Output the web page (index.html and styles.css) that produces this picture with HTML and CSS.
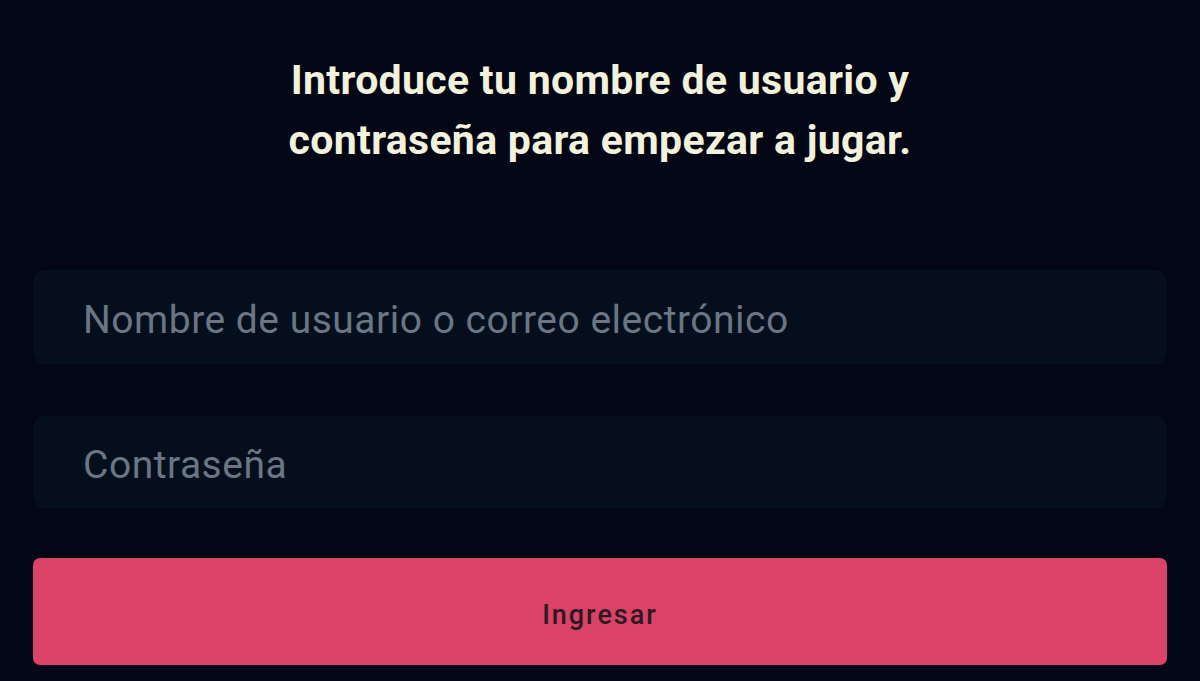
FILE: index.html
```
<!DOCTYPE html>
<html lang="es">
<head>
<meta charset="utf-8">
<link rel="stylesheet" href="styles.css">
</head>
<body>
<main class="login">
  <h1 class="title">Introduce tu nombre de usuario y<br>contraseña para empezar a jugar.</h1>
  <form class="form">
    <input class="field" type="text" placeholder="Nombre de usuario o correo electrónico">
    <input class="field field-pass" type="password" placeholder="Contraseña">
    <button class="submit" type="button">Ingresar</button>
  </form>
</main>
</body>
</html>
```
FILE: styles.css
```
html, body {
  margin: 0;
  padding: 0;
  background: #030614;
  height: 100%;
  overflow: hidden;
}
body {
  font-family: Roboto, "Liberation Sans", sans-serif;
}
.login {
  padding: 50px 33px 0;
}
.title {
  margin: 0;
  text-align: center;
  color: #f1f1dc;
  font-size: 41px;
  line-height: 60px;
  font-weight: 700;
  letter-spacing: 0.3px;
}
.form {
  margin-top: 100px;
  display: flex;
  flex-direction: column;
}
.field {
  box-sizing: border-box;
  height: 94px;
  border: none;
  outline: none;
  border-radius: 12px;
  background: #050e1c;
  padding: 6px 0 0 50px;
  font-family: inherit;
  font-size: 39px;
  letter-spacing: 0.5px;
  color: #c0c8d0;
}
.field::placeholder {
  color: #6a7684;
}
.field-pass {
  margin-top: 52px;
  height: 92px;
}
.submit {
  margin-top: 50px;
  height: 107px;
  border: none;
  border-radius: 7px;
  background: #da4267;
  color: #2b1a22;
  font-family: inherit;
  font-size: 27px;
  font-weight: 500;
  letter-spacing: 2px;
  padding: 6px 0 0;
}
```
